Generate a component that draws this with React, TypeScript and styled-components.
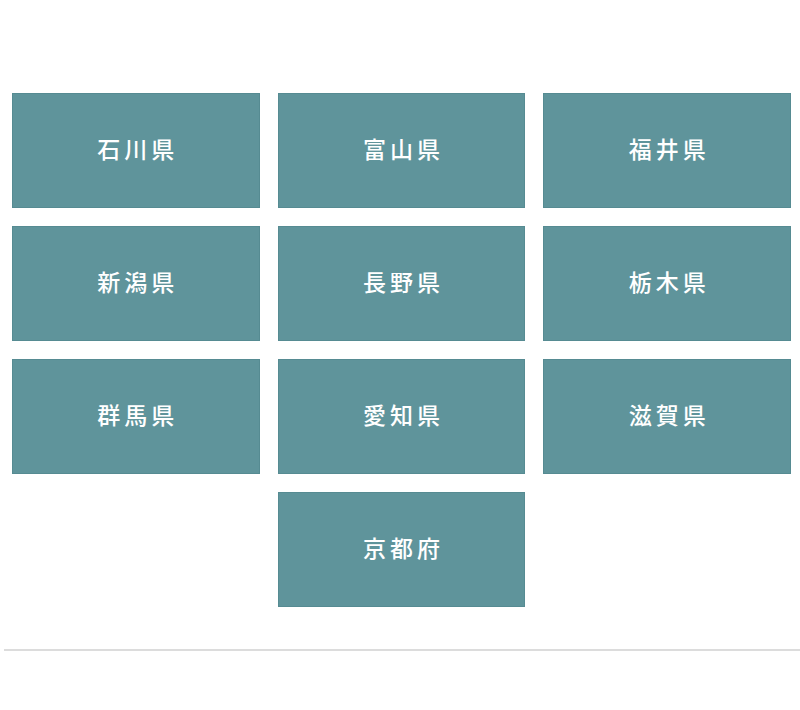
import React from "react";
import styled, { createGlobalStyle } from "styled-components";

const Global = createGlobalStyle`
  html, body { margin: 0; padding: 0; background: #ffffff; }
  body { font-family: "Noto Sans CJK JP", "Noto Sans", sans-serif; }
`;

const Page = styled.div`
  width: 800px;
  height: 710px;
  display: flex;
  flex-direction: column;
`;

const Grid = styled.div`
  margin: 93px 9px 0 12px;
  display: grid;
  grid-template-columns: repeat(3, 1fr);
  grid-auto-rows: 115px;
  column-gap: 18px;
  row-gap: 18px;
`;

const Tile = styled.a<{ $col?: number }>`
  grid-column: ${(p) => (p.$col ? `${p.$col} / span 1` : "auto")};
  display: flex;
  align-items: center;
  justify-content: center;
  background: #5f949b;
  box-shadow: inset 0 0 0 1px #568b92;
  color: #ffffff;
  font-size: 23px;
  font-weight: 500;
  letter-spacing: 4px;
  line-height: 1;
  text-decoration: none;
  padding: 0 0 5px 4px;
`;

const Divider = styled.hr`
  margin: 42px 0 0 4px;
  border: none;
  border-top: 2px solid #dcdcdc;
  height: 0;
`;

const rows = [
  ["石川県", "富山県", "福井県"],
  ["新潟県", "長野県", "栃木県"],
  ["群馬県", "愛知県", "滋賀県"],
];

export default function App() {
  return (
    <Page>
      <Global />
      <Grid>
        {rows.flat().map((name) => (
          <Tile key={name} href="#">
            {name}
          </Tile>
        ))}
        <Tile $col={2} href="#">
          京都府
        </Tile>
      </Grid>
      <Divider />
    </Page>
  );
}
